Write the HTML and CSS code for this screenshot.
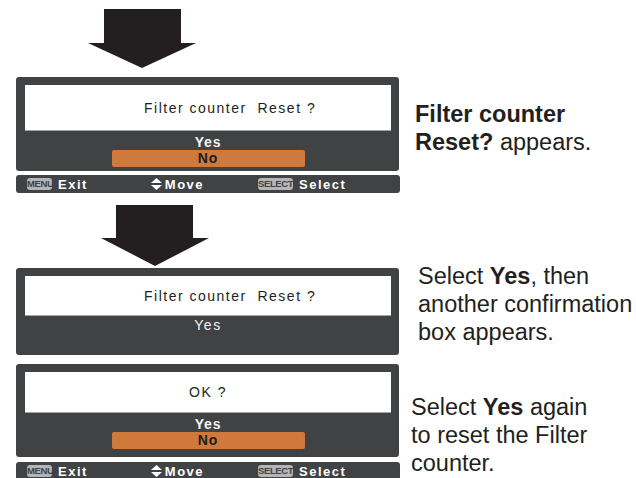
FILE: index.html
```html
<!DOCTYPE html>
<html>
<head>
<meta charset="utf-8">
<link rel="stylesheet" href="styles.css">
</head>
<body>
<div class="page">
  <div class="arrow arrow-1">
    <svg width="108" height="59" viewBox="0 0 108 59"><polygon points="16,0 93,0 93,34 108,34 54,59 0,34 16,34" fill="#231f20"/></svg>
  </div>
  <div class="step step-1">
    <div class="screen">
      <div class="dialog">
        <div class="panel panel-1"><span class="question">Filter counter&nbsp; Reset ?</span></div>
        <div class="opt yes">Yes</div>
        <div class="opt no">No</div>
      </div>
      <div class="status">
        <span class="badge badge-menu">MENU</span><span class="stext exit">Exit</span>
        <span class="move"><svg width="11" height="12" viewBox="0 0 11 12"><polygon points="5.5,0 11,5 0,5" fill="#fff"/><polygon points="0,7 11,7 5.5,12" fill="#fff"/></svg><span class="stext">Move</span></span>
        <span class="badge badge-select">SELECT</span><span class="stext">Select</span>
      </div>
    </div>
    <p class="note note-1"><b>Filter counter<br>Reset?</b> appears.</p>
  </div>

  <div class="arrow arrow-2">
    <svg width="108" height="61" viewBox="0 0 108 61"><polygon points="15,0 92,0 92,33 108,33 54,61 0,33 15,33" fill="#231f20"/></svg>
  </div>
  <div class="step step-2">
    <div class="screen">
      <div class="dialog">
        <div class="panel panel-2"><span class="question">Filter counter&nbsp; Reset ?</span></div>
        <div class="opt yes yes-plain">Yes</div>
        <div class="opt no no-hidden">No</div>
      </div>
    </div>
    <p class="note note-2">Select <b>Yes</b>, then<br>another confirmation<br>box appears.</p>
  </div>

  <div class="step step-3">
    <div class="screen">
      <div class="dialog dialog-3">
        <div class="panel panel-3 panel-center"><span class="question">OK ?</span></div>
        <div class="opt yes">Yes</div>
        <div class="opt no">No</div>
      </div>
      <div class="status">
        <span class="badge badge-menu">MENU</span><span class="stext exit">Exit</span>
        <span class="move"><svg width="11" height="12" viewBox="0 0 11 12"><polygon points="5.5,0 11,5 0,5" fill="#fff"/><polygon points="0,7 11,7 5.5,12" fill="#fff"/></svg><span class="stext">Move</span></span>
        <span class="badge badge-select">SELECT</span><span class="stext">Select</span>
      </div>
    </div>
    <p class="note note-3">Select <b>Yes</b> again<br>to reset the Filter<br>counter.</p>
  </div>
</div>
</body>
</html>
```

FILE: styles.css
```css
html, body {
  margin: 0;
  padding: 0;
  background: #ffffff;
  overflow: hidden;
}
body {
  width: 636px;
  height: 478px;
}
.page {
  padding-left: 16px;
  font-family: "Liberation Sans", Arial, sans-serif;
}
.arrow svg {
  display: block;
}
.arrow-1 {
  margin-left: 72px;
  padding-top: 9px;
}
.arrow-2 {
  margin-left: 85px;
  margin-top: 12px;
}
.step {
  display: flex;
  align-items: flex-start;
}
.step-1 {
  margin-top: 9px;
}
.step-2 {
  margin-top: 2px;
}
.step-3 {
  margin-top: 9px;
}
.screen {
  width: 384px;
  flex: none;
}
.dialog {
  width: 383px;
  box-sizing: border-box;
  background: #414244;
  border-radius: 3px;
  padding: 8px 8px 4px 9px;
}
.dialog-3 {
  padding-bottom: 8px;
}
.panel {
  background: #ffffff;
  border-bottom: 1px solid #a5a6a8;
  box-sizing: border-box;
  display: flex;
  align-items: center;
  padding-left: 119px;
}
.panel-1 { height: 46px; }
.panel-2 { height: 40px; }
.panel-3 { height: 41px; }
.panel-center {
  justify-content: center;
  padding-left: 0;
}
.question {
  font-family: "Liberation Sans", Arial, sans-serif;
  font-size: 14px;
  letter-spacing: 1.5px;
  color: #231f20;
}
.opt {
  height: 17px;
  line-height: 17px;
  text-align: center;
  font-size: 14px;
  letter-spacing: 0.8px;
}
.yes {
  margin-top: 3px;
  height: 16px;
  line-height: 16px;
  color: #f4f4f4;
  font-weight: bold;
}
.yes-plain {
  margin-top: 1px;
  height: 17px;
  line-height: 17px;
  font-weight: normal;
  letter-spacing: 1.6px;
}
.no {
  width: 193px;
  margin: 0 auto;
  background: #cf7a3c;
  border-radius: 2px;
  color: #1c1c1c;
  font-weight: bold;
}
.no-hidden {
  visibility: hidden;
}
.status {
  margin-top: 4px;
  height: 18px;
  background: #414244;
  border-radius: 3px;
  display: flex;
  align-items: center;
  padding-left: 11px;
}
.dialog-3 + .status {
  margin-top: 5px;
}
.badge {
  height: 12px;
  line-height: 12px;
  background: #b4b5b7;
  border-radius: 3px;
  color: #414244;
  font-family: "Liberation Sans Narrow", "Liberation Sans", sans-serif;
  font-size: 9.5px;
  font-weight: bold;
  letter-spacing: -0.4px;
  text-align: center;
  box-sizing: border-box;
  overflow: hidden;
}
.badge-menu {
  width: 25px;
}
.badge-select {
  width: 35px;
  margin-left: 54px;
}
.stext {
  color: #ffffff;
  font-size: 13px;
  font-weight: bold;
  letter-spacing: 1.5px;
  margin-left: 6px;
}
.move {
  display: flex;
  align-items: center;
  margin-left: 63px;
}
.move svg {
  display: block;
}
.move .stext {
  margin-left: 3px;
}
.note {
  margin: 0;
  font-size: 23.5px;
  line-height: 28px;
  color: #231f20;
  white-space: nowrap;
}
.note b {
  font-weight: bold;
}
.note-1 {
  margin-left: 15px;
  margin-top: 23px;
}
.note-2 {
  margin-left: 18px;
  margin-top: -6px;
}
.note-3 {
  margin-left: 11px;
  margin-top: 29px;
}
```
